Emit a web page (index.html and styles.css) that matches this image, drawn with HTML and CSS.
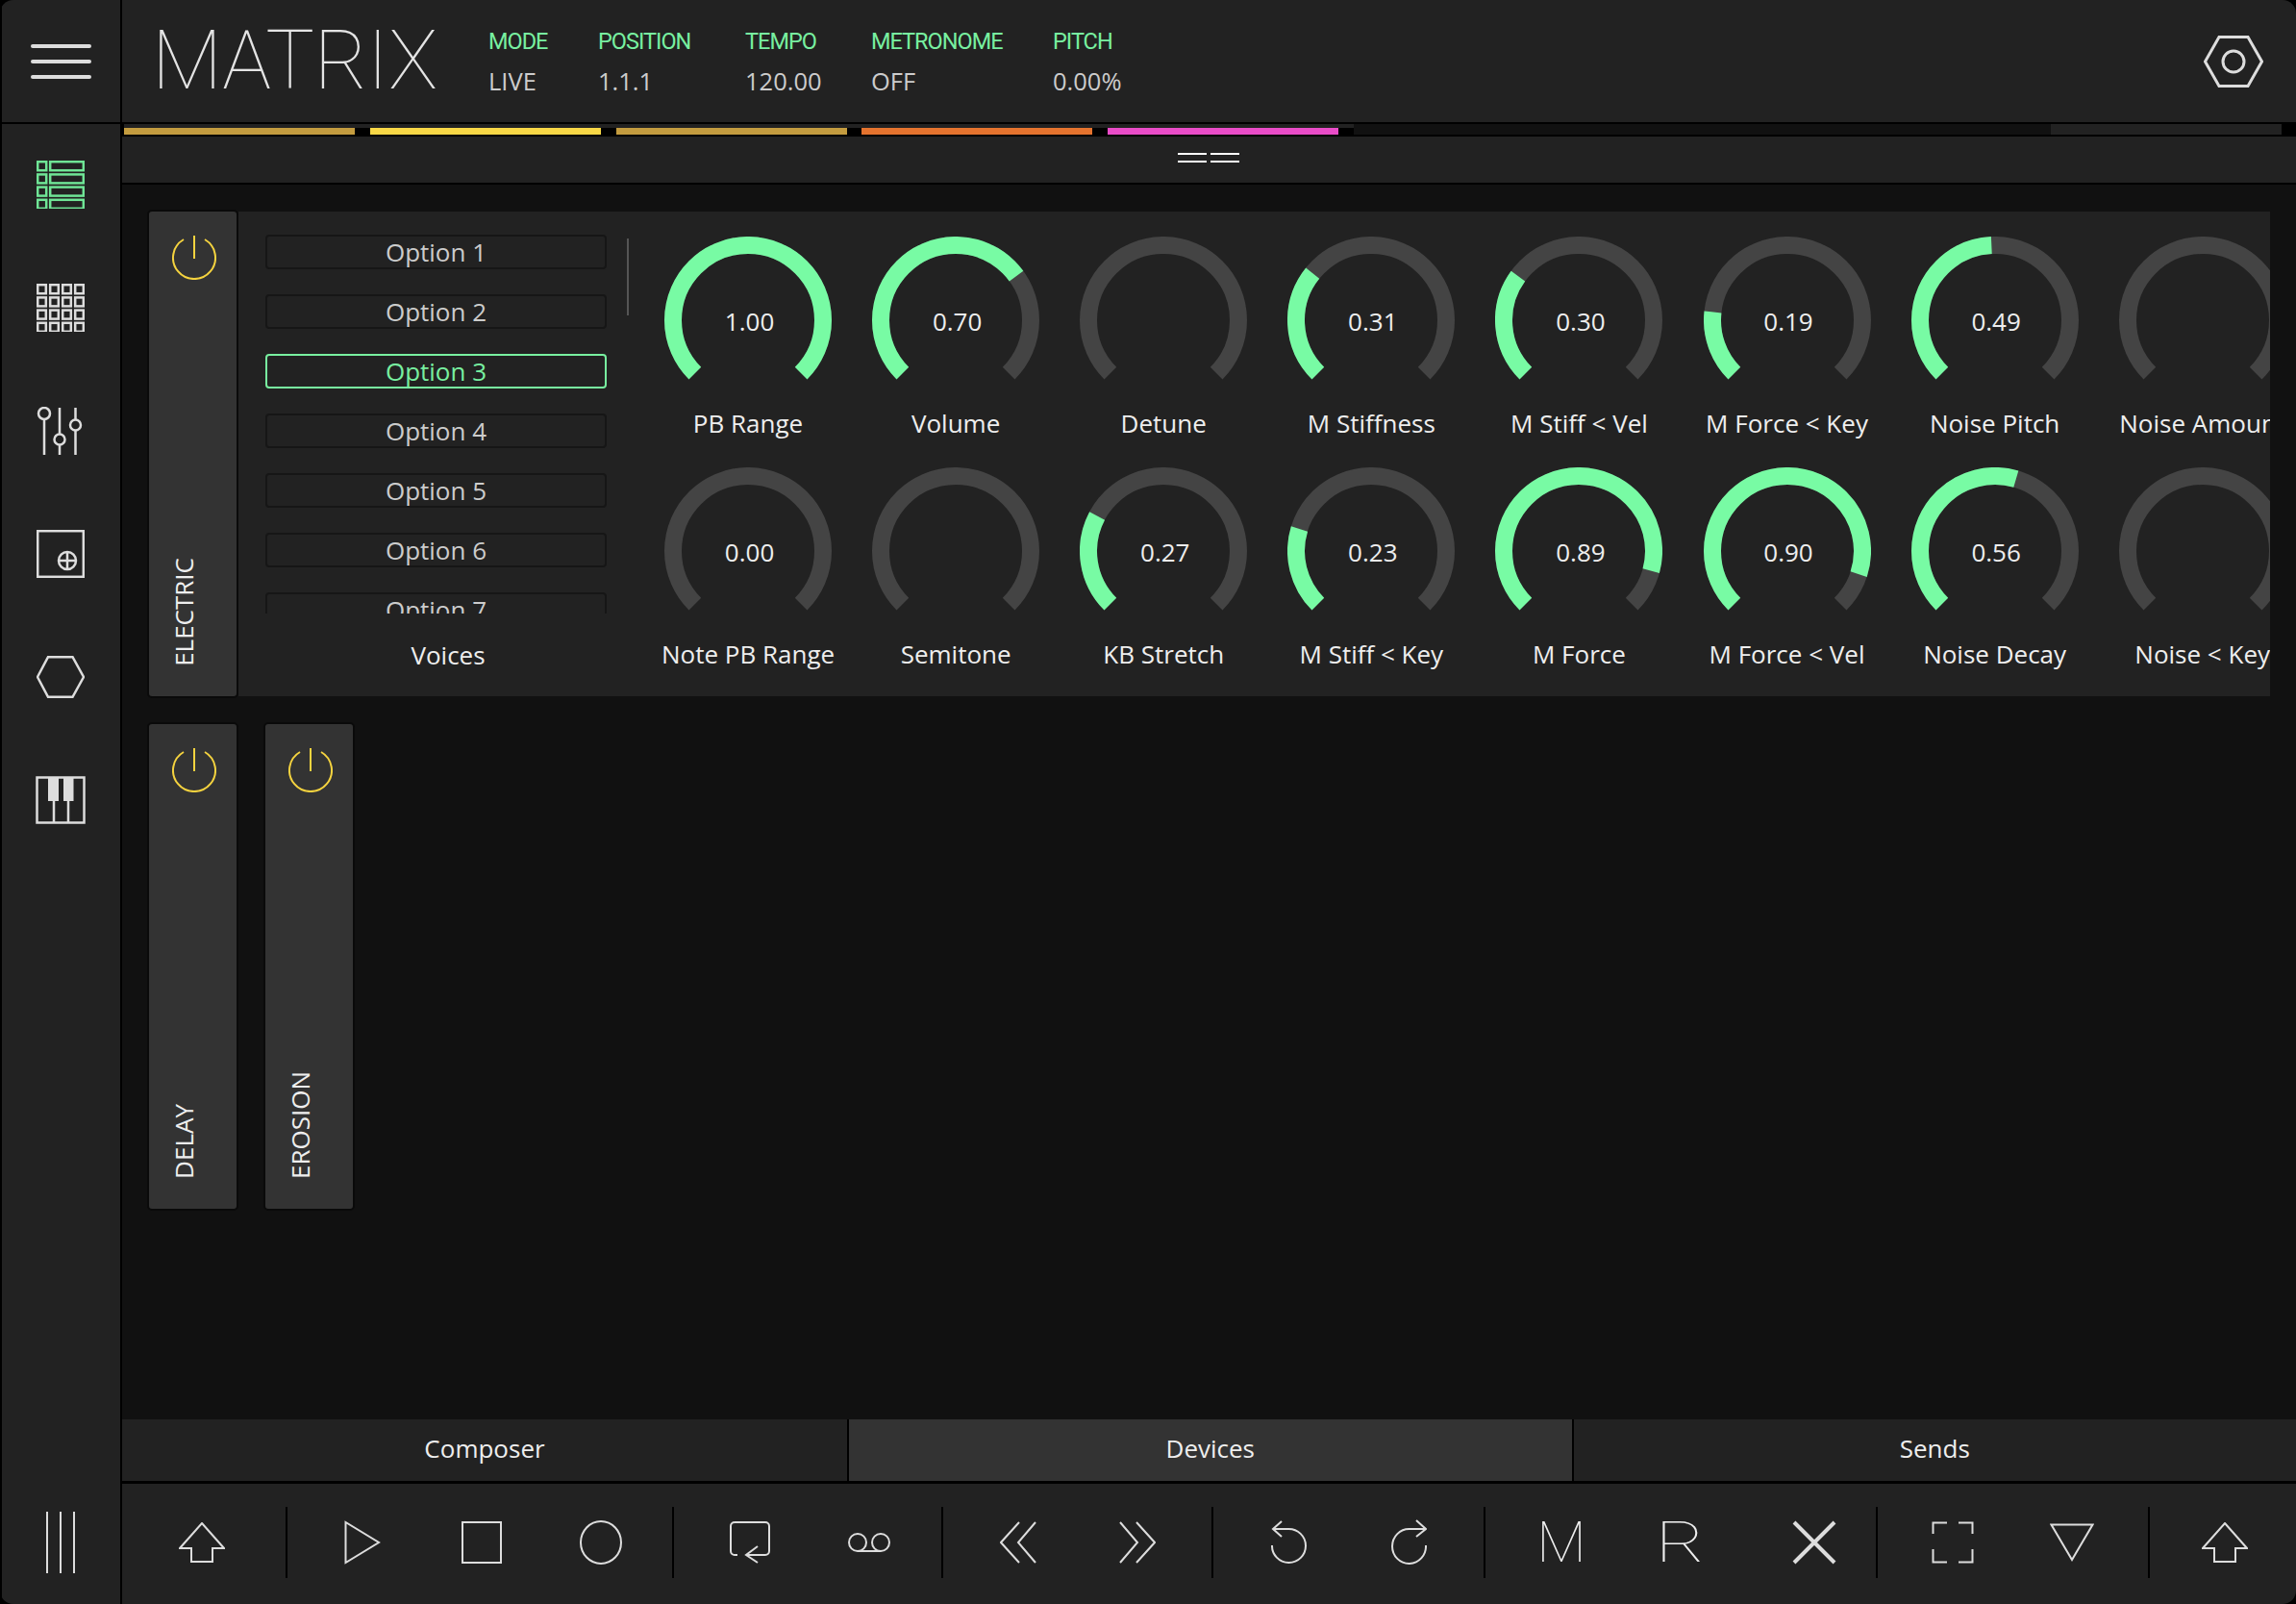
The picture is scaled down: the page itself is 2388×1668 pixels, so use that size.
FILE: index.html

```html
<!DOCTYPE html>
<html lang="en">
<head>
    <meta charset="UTF-8">
    <title>Matrix</title>
    <link rel="stylesheet" href="styles.css">
</head>
<body>
<div class="app">
    <!-- Left sidebar -->
    <aside class="sidebar">
        <div class="menu-cell">
            <span class="burger"></span>
            <span class="burger"></span>
            <span class="burger"></span>
        </div>
        <div class="side-cell green">
            <svg width="50" height="50" viewBox="0 0 50 50">
                <rect x="1.2" y="1.2" width="9" height="9"/><rect x="14.2" y="1.2" width="34.6" height="9"/>
                <rect x="1.2" y="14.4" width="9" height="9"/><rect x="14.2" y="14.4" width="34.6" height="9"/>
                <rect x="1.2" y="27.6" width="9" height="9"/><rect x="14.2" y="27.6" width="34.6" height="9"/>
                <rect x="1.2" y="40.8" width="9" height="9"/><rect x="14.2" y="40.8" width="34.6" height="9"/>
            </svg>
        </div>
        <div class="side-cell">
            <svg width="50" height="50" viewBox="0 0 50 50">
                <rect x="1.2" y="1.2" width="8.6" height="9"/><rect x="14.2" y="1.2" width="8.6" height="9"/><rect x="27.2" y="1.2" width="8.6" height="9"/><rect x="40.2" y="1.2" width="8.6" height="9"/>
                <rect x="1.2" y="14.4" width="8.6" height="9"/><rect x="14.2" y="14.4" width="8.6" height="9"/><rect x="27.2" y="14.4" width="8.6" height="9"/><rect x="40.2" y="14.4" width="8.6" height="9"/>
                <rect x="1.2" y="27.6" width="8.6" height="9"/><rect x="14.2" y="27.6" width="8.6" height="9"/><rect x="27.2" y="27.6" width="8.6" height="9"/><rect x="40.2" y="27.6" width="8.6" height="9"/>
                <rect x="1.2" y="40.8" width="8.6" height="9"/><rect x="14.2" y="40.8" width="8.6" height="9"/><rect x="27.2" y="40.8" width="8.6" height="9"/><rect x="40.2" y="40.8" width="8.6" height="9"/>
            </svg>
        </div>
        <div class="side-cell">
            <svg width="50" height="50" viewBox="0 0 50 50">
                <path d="M8 14V50M24 1V50M40.500 1V50"/>
                <circle class="solid" cx="8" cy="7" r="6"/>
                <circle class="solid" cx="24" cy="34" r="5.500"/>
                <circle class="solid" cx="40.500" cy="19" r="5.500"/>
            </svg>
        </div>
        <div class="side-cell">
            <svg width="50" height="50" viewBox="0 0 50 50">
                <rect x="1.200" y="1.200" width="47.600" height="47.600"/>
                <circle cx="32" cy="32" r="9"/>
                <path d="M32 23V41M23 32H41"/>
            </svg>
        </div>
        <div class="side-cell">
            <svg width="50" height="44" viewBox="0 0 50 44">
                <path d="M1 22L12 1.200H37.500L49 22L37.500 42.800H12Z"/>
            </svg>
        </div>
        <div class="side-cell">
            <svg width="52" height="50" viewBox="0 0 52 50">
                <rect x="1.500" y="1.500" width="49" height="47"/>
                <path d="M19 26V48M34 26V48"/>
                <rect class="key" x="13" y="1" width="11" height="25"/>
                <rect class="key" x="29" y="1" width="10.500" height="25"/>
            </svg>
        </div>
        <div class="side-foot">
            <span class="foot-line"></span>
            <span class="foot-line"></span>
            <span class="foot-line"></span>
        </div>
    </aside>

    <div class="main">
        <!-- Top bar -->
        <header class="topbar">
            <div class="logo">MATRIX</div>
            <div class="stats">
                <div class="stat"><div class="stat-label">MODE</div><div class="stat-value">LIVE</div></div>
                <div class="stat"><div class="stat-label">POSITION</div><div class="stat-value">1.1.1</div></div>
                <div class="stat"><div class="stat-label">TEMPO</div><div class="stat-value">120.00</div></div>
                <div class="stat"><div class="stat-label">METRONOME</div><div class="stat-value">OFF</div></div>
                <div class="stat"><div class="stat-label">PITCH</div><div class="stat-value">0.00%</div></div>
            </div>
            <svg class="settings" width="62" height="54" viewBox="0 0 62 54">
                <path d="M1.500 27L16 1.500H46L60.500 27L46 52.500H16Z"/>
                <circle cx="31" cy="27" r="11"/>
            </svg>
        </header>

        <!-- Track colours -->
        <div class="strip">
            <div class="slot"><div class="bar gold"></div></div>
            <div class="slot"><div class="bar yellow"></div></div>
            <div class="slot"><div class="bar gold"></div></div>
            <div class="slot"><div class="bar orange"></div></div>
            <div class="slot"><div class="bar pink"></div></div>
            <div class="strip-rest"></div>
            <div class="strip-end"></div>
        </div>

        <div class="handle">
            <svg width="64" height="10" viewBox="0 0 64 10">
                <path d="M0 1H30M34 1H64M0 9H30M34 9H64"/>
            </svg>
        </div>

        <!-- Devices -->
        <div class="devices">
            <div class="device-row">
                <div class="device-tab">
                    <svg class="power" width="46" height="47" viewBox="0 0 46 47"><path d="M23 1V25M12 5A22 22 0 1 0 34 5"/></svg>
                    <span class="device-name">ELECTRIC</span>
                </div>
                <div class="device-body">
                    <div class="voices">
                        <div class="voice-list">
                            <div class="option">Option 1</div>
                            <div class="option">Option 2</div>
                            <div class="option active">Option 3</div>
                            <div class="option">Option 4</div>
                            <div class="option">Option 5</div>
                            <div class="option">Option 6</div>
                            <div class="option">Option 7</div>
                        </div>
                        <div class="voice-thumb"></div>
                        <div class="voice-label">Voices</div>
                    </div>
                    <div class="knobs">
                        <div class="knob">
                            <div class="dial">
                                <svg width="174" height="174" viewBox="0 0 174 174"><path class="track" d="M31.850 142.150A78 78 0 1 1 142.150 142.150"/><path class="level" pathLength="100" stroke-dasharray="100 100" d="M31.850 142.150A78 78 0 1 1 142.150 142.150"/></svg>
                                <span class="dial-value">1.00</span>
                            </div>
                            <div class="knob-label">PB Range</div>
                        </div>
                        <div class="knob">
                            <div class="dial">
                                <svg width="174" height="174" viewBox="0 0 174 174"><path class="track" d="M31.850 142.150A78 78 0 1 1 142.150 142.150"/><path class="level" pathLength="100" stroke-dasharray="70 100" d="M31.850 142.150A78 78 0 1 1 142.150 142.150"/></svg>
                                <span class="dial-value">0.70</span>
                            </div>
                            <div class="knob-label">Volume</div>
                        </div>
                        <div class="knob">
                            <div class="dial">
                                <svg width="174" height="174" viewBox="0 0 174 174"><path class="track" d="M31.850 142.150A78 78 0 1 1 142.150 142.150"/></svg>
                            </div>
                            <div class="knob-label">Detune</div>
                        </div>
                        <div class="knob">
                            <div class="dial">
                                <svg width="174" height="174" viewBox="0 0 174 174"><path class="track" d="M31.850 142.150A78 78 0 1 1 142.150 142.150"/><path class="level" pathLength="100" stroke-dasharray="31 100" d="M31.850 142.150A78 78 0 1 1 142.150 142.150"/></svg>
                                <span class="dial-value">0.31</span>
                            </div>
                            <div class="knob-label">M Stiffness</div>
                        </div>
                        <div class="knob">
                            <div class="dial">
                                <svg width="174" height="174" viewBox="0 0 174 174"><path class="track" d="M31.850 142.150A78 78 0 1 1 142.150 142.150"/><path class="level" pathLength="100" stroke-dasharray="30 100" d="M31.850 142.150A78 78 0 1 1 142.150 142.150"/></svg>
                                <span class="dial-value">0.30</span>
                            </div>
                            <div class="knob-label">M Stiff &lt; Vel</div>
                        </div>
                        <div class="knob">
                            <div class="dial">
                                <svg width="174" height="174" viewBox="0 0 174 174"><path class="track" d="M31.850 142.150A78 78 0 1 1 142.150 142.150"/><path class="level" pathLength="100" stroke-dasharray="19 100" d="M31.850 142.150A78 78 0 1 1 142.150 142.150"/></svg>
                                <span class="dial-value">0.19</span>
                            </div>
                            <div class="knob-label">M Force &lt; Key</div>
                        </div>
                        <div class="knob">
                            <div class="dial">
                                <svg width="174" height="174" viewBox="0 0 174 174"><path class="track" d="M31.850 142.150A78 78 0 1 1 142.150 142.150"/><path class="level" pathLength="100" stroke-dasharray="49 100" d="M31.850 142.150A78 78 0 1 1 142.150 142.150"/></svg>
                                <span class="dial-value">0.49</span>
                            </div>
                            <div class="knob-label">Noise Pitch</div>
                        </div>
                        <div class="knob">
                            <div class="dial">
                                <svg width="174" height="174" viewBox="0 0 174 174"><path class="track" d="M31.850 142.150A78 78 0 1 1 142.150 142.150"/></svg>
                            </div>
                            <div class="knob-label">Noise Amount</div>
                        </div>

                        <div class="knob">
                            <div class="dial">
                                <svg width="174" height="174" viewBox="0 0 174 174"><path class="track" d="M31.850 142.150A78 78 0 1 1 142.150 142.150"/></svg>
                                <span class="dial-value">0.00</span>
                            </div>
                            <div class="knob-label">Note PB Range</div>
                        </div>
                        <div class="knob">
                            <div class="dial">
                                <svg width="174" height="174" viewBox="0 0 174 174"><path class="track" d="M31.850 142.150A78 78 0 1 1 142.150 142.150"/></svg>
                            </div>
                            <div class="knob-label">Semitone</div>
                        </div>
                        <div class="knob">
                            <div class="dial">
                                <svg width="174" height="174" viewBox="0 0 174 174"><path class="track" d="M31.850 142.150A78 78 0 1 1 142.150 142.150"/><path class="level" pathLength="100" stroke-dasharray="27 100" d="M31.850 142.150A78 78 0 1 1 142.150 142.150"/></svg>
                                <span class="dial-value">0.27</span>
                            </div>
                            <div class="knob-label">KB Stretch</div>
                        </div>
                        <div class="knob">
                            <div class="dial">
                                <svg width="174" height="174" viewBox="0 0 174 174"><path class="track" d="M31.850 142.150A78 78 0 1 1 142.150 142.150"/><path class="level" pathLength="100" stroke-dasharray="23 100" d="M31.850 142.150A78 78 0 1 1 142.150 142.150"/></svg>
                                <span class="dial-value">0.23</span>
                            </div>
                            <div class="knob-label">M Stiff &lt; Key</div>
                        </div>
                        <div class="knob">
                            <div class="dial">
                                <svg width="174" height="174" viewBox="0 0 174 174"><path class="track" d="M31.850 142.150A78 78 0 1 1 142.150 142.150"/><path class="level" pathLength="100" stroke-dasharray="89 100" d="M31.850 142.150A78 78 0 1 1 142.150 142.150"/></svg>
                                <span class="dial-value">0.89</span>
                            </div>
                            <div class="knob-label">M Force</div>
                        </div>
                        <div class="knob">
                            <div class="dial">
                                <svg width="174" height="174" viewBox="0 0 174 174"><path class="track" d="M31.850 142.150A78 78 0 1 1 142.150 142.150"/><path class="level" pathLength="100" stroke-dasharray="90 100" d="M31.850 142.150A78 78 0 1 1 142.150 142.150"/></svg>
                                <span class="dial-value">0.90</span>
                            </div>
                            <div class="knob-label">M Force &lt; Vel</div>
                        </div>
                        <div class="knob">
                            <div class="dial">
                                <svg width="174" height="174" viewBox="0 0 174 174"><path class="track" d="M31.850 142.150A78 78 0 1 1 142.150 142.150"/><path class="level" pathLength="100" stroke-dasharray="56 100" d="M31.850 142.150A78 78 0 1 1 142.150 142.150"/></svg>
                                <span class="dial-value">0.56</span>
                            </div>
                            <div class="knob-label">Noise Decay</div>
                        </div>
                        <div class="knob">
                            <div class="dial">
                                <svg width="174" height="174" viewBox="0 0 174 174"><path class="track" d="M31.850 142.150A78 78 0 1 1 142.150 142.150"/></svg>
                            </div>
                            <div class="knob-label">Noise &lt; Key</div>
                        </div>
                    </div>
                </div>
            </div>
            <div class="device-row">
                <div class="device-tab">
                    <svg class="power" width="46" height="47" viewBox="0 0 46 47"><path d="M23 1V25M12 5A22 22 0 1 0 34 5"/></svg>
                    <span class="device-name">DELAY</span>
                </div>
                <div class="device-tab">
                    <svg class="power" width="46" height="47" viewBox="0 0 46 47"><path d="M23 1V25M12 5A22 22 0 1 0 34 5"/></svg>
                    <span class="device-name">EROSION</span>
                </div>
            </div>
        </div>

        <!-- Bottom tabs -->
        <nav class="tabs">
            <div class="tab">Composer</div>
            <div class="tab selected">Devices</div>
            <div class="tab">Sends</div>
        </nav>

        <!-- Transport toolbar -->
        <div class="toolbar">
            <div class="tool-group first">
                <div class="tool"><svg width="48" height="42" viewBox="0 0 48 42"><path d="M24 1L47 27H35V41H13V27H1Z"/></svg></div>
            </div>
            <div class="tool-group nudge">
                <div class="tool"><svg width="38" height="46" viewBox="0 0 38 46"><path d="M1.500 2V44L36 23Z"/></svg></div>
                <div class="tool"><svg width="42" height="44" viewBox="0 0 42 44"><rect x="1" y="1" width="40" height="42"/></svg></div>
                <div class="tool"><svg width="44" height="46" viewBox="0 0 44 46"><ellipse cx="22" cy="23" rx="21" ry="22"/></svg></div>
            </div>
            <div class="tool-group nudge">
                <div class="tool"><svg width="42" height="44" viewBox="0 0 42 44"><path d="M8 35H5A4 4 0 0 1 1 31V5A4 4 0 0 1 5 1H37A4 4 0 0 1 41 5V31A4 4 0 0 1 37 35H17M29 26L17 35L29 43"/></svg></div>
                <div class="tool"><svg width="44" height="22" viewBox="0 0 44 22"><circle cx="10" cy="11" r="9"/><circle cx="34" cy="11" r="9"/><path d="M10 20H34"/></svg></div>
            </div>
            <div class="tool-group seek">
                <div class="tool"><svg width="38" height="44" viewBox="0 0 38 44"><path d="M20 1L1 22L20 43M37 1L19 22L37 43"/></svg></div>
                <div class="tool"><svg width="38" height="44" viewBox="0 0 38 44"><path d="M1 1L19 22L1 43M18 1L37 22L18 43"/></svg></div>
            </div>
            <div class="tool-group">
                <div class="tool"><svg width="38" height="46" viewBox="0 0 38 46"><path d="M11 1L2 9L11 17M2 9H18A17.500 17.500 0 1 1 1 26"/></svg></div>
                <div class="tool"><svg width="38" height="48" viewBox="0 0 38 48"><path d="M27 1L37 10L27 18M37 10H20A17.500 18 0 1 0 37 27"/></svg></div>
            </div>
            <div class="tool-group">
                <div class="tool thin-letter">M</div>
                <div class="tool thin-letter"><span class="wide-letter">R</span></div>
                <div class="tool shift-x"><svg class="close" width="46" height="46" viewBox="0 0 46 46"><path d="M2 2L44 44M44 2L2 44"/></svg></div>
            </div>
            <div class="tool-group view">
                <div class="tool"><svg width="44" height="44" viewBox="0 0 44 44"><path d="M16 1.500H1.500V13M28 1.500H42.500V13M16 42.500H1.500V29M28 42.500H42.500V29"/></svg></div>
                <div class="tool"><svg width="46" height="40" viewBox="0 0 46 40"><path d="M1.500 1.500H44.500L23 38Z"/></svg></div>
            </div>
            <div class="tool-group last">
                <div class="tool"><svg width="48" height="42" viewBox="0 0 48 42"><path d="M24 1L47 27H35V41H13V27H1Z"/></svg></div>
            </div>
        </div>
    </div>
</div>
</body>
</html>
```

FILE: styles.css

```css
/* Basic styles for the page */
* {
    box-sizing: border-box;
}

body {
    margin: 0;
    background-color: #000;
    font-family: "Open Sans", sans-serif;
    color: #eee;
    overflow: hidden;
}

svg {
    display: block;
    fill: none;
    stroke: #ddd;
    stroke-width: 2;
}

.app {
    display: flex;
    width: 2388px;
    height: 1668px;
    padding-left: 2px;
    background-color: #000;
    border-radius: 14px;
    overflow: hidden;
}

/* Sidebar */
.sidebar {
    width: 125px;
    flex-shrink: 0;
    display: flex;
    flex-direction: column;
    background-color: #222;
    border-right: 2px solid #000;
}

.menu-cell {
    height: 129px;
    flex-shrink: 0;
    display: flex;
    flex-direction: column;
    align-items: center;
    gap: 12px;
    padding-top: 46px;
    border-bottom: 2px solid #000;
}

.burger {
    width: 63px;
    height: 4px;
    border-radius: 2px;
    background-color: #ddd;
}

.side-cell {
    height: 128px;
    display: flex;
    align-items: center;
    justify-content: center;
    padding: 0 1px 2px 0;
}

.side-cell svg {
    stroke-width: 2.5;
}

.side-cell.green svg {
    stroke: #6fe596;
}

.side-cell .solid {
    fill: #222;
}

.side-cell .key {
    fill: #ddd;
    stroke: none;
}

.side-foot {
    margin-top: auto;
    height: 125px;
    display: flex;
    justify-content: center;
    align-items: center;
    gap: 12px;
    padding: 0 2px 4px 0;
}

.foot-line {
    width: 2px;
    height: 64px;
    background-color: #ddd;
}

/* Main column */
.main {
    flex: 1;
    min-width: 0;
    display: flex;
    flex-direction: column;
}

.topbar {
    height: 129px;
    flex-shrink: 0;
    display: flex;
    align-items: center;
    padding: 0 34px;
    background-color: #222;
    border-bottom: 2px solid #000;
}

.logo {
    width: 350px;
    margin-left: -3px;
    font-family: Roboto, sans-serif;
    font-weight: 100;
    font-size: 85px;
    letter-spacing: -0.4px;
    line-height: 1;
    color: #e4e4e4;
}

.stats {
    display: grid;
    grid-template-columns: 114px 153px 131px 189px auto;
}

.stat-label {
    font-family: Roboto, sans-serif;
    font-size: 23.500px;
    letter-spacing: -1px;
    line-height: 30px;
    color: #78f0a0;
    margin-bottom: 11px;
}

.stat-value {
    font-size: 25.500px;
    line-height: 30px;
    color: #ccc;
}

.settings {
    margin-left: auto;
    stroke-width: 3;
}

/* Colour strip */
.strip {
    height: 13px;
    flex-shrink: 0;
    display: flex;
    padding-left: 2px;
    background-color: #000;
    border-bottom: 2px solid #000;
}

.slot {
    width: 255.750px;
    flex-shrink: 0;
    padding-top: 4px;
    background: linear-gradient(#222 4px, #000 4px);
}

.bar {
    width: 240px;
    height: 7px;
}

.gold { background-color: #c49c3f; }
.yellow { background-color: #f9d846; }
.orange { background-color: #e5732e; }
.pink { background-color: #ea4cc8; }

.strip-rest {
    flex: 1;
    background-color: #111;
}

.strip-end {
    width: 240px;
    margin-right: 15px;
    background-color: #222;
}

.handle {
    height: 50px;
    flex-shrink: 0;
    display: flex;
    align-items: center;
    justify-content: center;
    padding-bottom: 4px;
    background-color: #222;
    border-bottom: 2px solid #000;
}

.handle svg {
    stroke: #fff;
    margin-left: -2px;
}

/* Devices */
.devices {
    flex: 1;
    display: flex;
    flex-direction: column;
    gap: 25px;
    padding: 26px 27px 0 26px;
    background-color: #111;
}

.device-row {
    display: flex;
    gap: 26px;
}

.device-row:first-child {
    gap: 0;
}

.device-tab {
    width: 95px;
    height: 508px;
    flex-shrink: 0;
    display: flex;
    flex-direction: column;
    align-items: center;
    justify-content: space-between;
    padding: 24px 0 31px;
    background-color: #333;
    border: 2px solid #0a0a0a;
    border-radius: 5px;
}

.power {
    stroke: #f5d33f;
    margin-left: 3px;
}

.device-name {
    writing-mode: vertical-rl;
    transform: rotate(180deg);
    font-size: 26px;
    line-height: 30px;
    margin-right: 20px;
}

.device-body {
    flex: 1;
    min-width: 0;
    height: 504px;
    margin-top: 2px;
    display: flex;
    position: relative;
    background-color: #222;
    overflow: hidden;
}

.voices {
    width: 422px;
    flex-shrink: 0;
    padding: 24px 0 0 28px;
}

.voice-list {
    width: 355px;
    height: 394px;
    display: flex;
    flex-direction: column;
    gap: 26px;
    overflow: hidden;
}

.option {
    height: 36px;
    flex-shrink: 0;
    display: flex;
    align-items: center;
    justify-content: center;
    padding-bottom: 1px;
    font-size: 26px;
    color: #ccc;
    background-color: #222;
    border: 2px solid #161616;
    border-radius: 4px;
}

.option.active {
    color: #78f0a0;
    border-color: #78f0a0;
}

.voice-thumb {
    position: absolute;
    left: 404px;
    top: 28px;
    width: 2px;
    height: 80px;
    background-color: #555;
}

.voice-label {
    margin-top: 26px;
    width: 380px;
    text-align: center;
    font-size: 26px;
    line-height: 34px;
}

.knobs {
    flex: 1;
    min-width: 0;
    display: grid;
    grid-template-columns: repeat(8, 216.100px);
    row-gap: 29px;
    align-content: start;
    padding-top: 26px;
    overflow: hidden;
}

.dial {
    width: 174px;
    height: 174px;
    margin: 0 auto;
    position: relative;
}

.track,
.level {
    stroke-width: 18;
}

.track {
    stroke: #444;
}

.level {
    stroke: #78fba4;
}

.dial-value {
    position: absolute;
    inset: 0;
    display: flex;
    align-items: center;
    justify-content: center;
    padding: 2px 0 0 3px;
    font-size: 26px;
}

.knob-label {
    margin-top: 3px;
    text-align: center;
    white-space: nowrap;
    font-size: 26px;
    line-height: 34px;
}

/* Bottom tabs */
.tabs {
    height: 67px;
    flex-shrink: 0;
    display: flex;
    border-bottom: 3px solid #000;
}

.tab {
    flex: 1;
    display: flex;
    align-items: center;
    justify-content: center;
    padding-bottom: 5px;
    font-size: 26px;
    background-color: #222;
    border-left: 2px solid #000;
}

.tab:first-child {
    flex: 0 0 754px;
    border-left: 0;
}

.tab.selected {
    background-color: #333;
}

/* Toolbar */
.toolbar {
    height: 125px;
    flex-shrink: 0;
    display: grid;
    grid-template-columns: 170px 402px 280px 281px 283px 408px 283px 1fr;
    align-items: center;
    padding-bottom: 3px;
    background-color: #222;
}

.tool-group {
    height: 74px;
    display: flex;
    align-items: center;
    justify-content: center;
    border-left: 2px solid #000;
}

.tool-group.first {
    border-left: 0;
    padding-right: 4px;
}

.tool-group.nudge {
    padding-left: 3px;
}

.tool-group.seek {
    padding-left: 1px;
}

.tool-group.view {
    padding-right: 2px;
}

.tool-group.last {
    padding-left: 4px;
}

.tool {
    width: 124px;
    display: flex;
    align-items: center;
    justify-content: center;
}

.thin-letter {
    font-family: Roboto, sans-serif;
    font-weight: 100;
    font-size: 60px;
    line-height: 60px;
    color: #eee;
}

.wide-letter {
    display: block;
    transform: scaleX(1.3);
}

.shift-x {
    margin-left: 15px;
    margin-right: -15px;
}

.close {
    stroke-width: 4;
}
```
